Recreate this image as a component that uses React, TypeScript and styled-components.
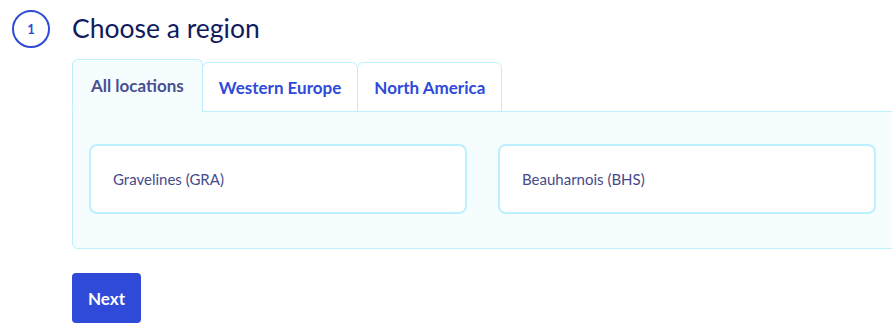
import styled, { createGlobalStyle } from "styled-components";
import { useState } from "react";

const GlobalStyle = createGlobalStyle`
    html, body {
        margin: 0;
        padding: 0;
        background: #ffffff;
        overflow: hidden;
    }
    body {
        font-family: "Lato", "Noto Sans", sans-serif;
    }
`;

const regions = ["All locations", "Western Europe", "North America"];
const locations = ["Gravelines (GRA)", "Beauharnois (BHS)"];

const App = () => {
    const [active, setActive] = useState(0);

    return (
        <>
            <GlobalStyle />
            <Step>
                <StepHeader>
                    <StepNumber>1</StepNumber>
                    <StepTitle>Choose a region</StepTitle>
                </StepHeader>
                <StepBody>
                    <TabList>
                        {regions.map((label, i) => (
                            <Tab key={label} $active={i === active} onClick={() => setActive(i)}>
                                {label}
                            </Tab>
                        ))}
                    </TabList>
                    <TabPanel>
                        {locations.map((name) => (
                            <LocationCard key={name}>{name}</LocationCard>
                        ))}
                    </TabPanel>
                    <NextButton type="button">Next</NextButton>
                </StepBody>
            </Step>
        </>
    );
};

export default App;

const Step = styled.div`
    padding: 10px 0 0 12px;
`;

const StepHeader = styled.div`
    display: flex;
    align-items: center;
    gap: 22px;
    height: 38px;
`;

const StepNumber = styled.div`
    box-sizing: border-box;
    width: 38px;
    height: 38px;
    border: 2px solid #2e4ad9;
    border-radius: 50%;
    display: flex;
    align-items: center;
    justify-content: center;
    color: #2e4ad9;
    font-size: 13px;
    font-weight: 700;
`;

const StepTitle = styled.h2`
    margin: 0 0 2px;
    font-size: 26.5px;
    font-weight: 400;
    color: #101a5e;
`;

const StepBody = styled.div`
    margin-left: 60px;
    padding-top: 11px;
`;

const TabList = styled.div`
    display: flex;
    align-items: flex-end;
    height: 53px;
    margin-bottom: -1px;
    position: relative;
    z-index: 1;
`;

const Tab = styled.button<{ $active: boolean }>`
    box-sizing: border-box;
    height: ${(p) => (p.$active ? "53px" : "50px")};
    padding: 0 ${(p) => (p.$active ? "18px" : "16px")};
    margin-right: -1px;
    border: 1px solid #bdefff;
    border-bottom-color: ${(p) => (p.$active ? "#f5fdff" : "#bdefff")};
    border-radius: 6px 6px 0 0;
    background: ${(p) => (p.$active ? "#f5fdff" : "#ffffff")};
    color: ${(p) => (p.$active ? "#4a4f8f" : "#2e4ad9")};
    font-family: inherit;
    font-size: 17px;
    font-weight: 700;
    cursor: pointer;
`;

const TabPanel = styled.div`
    box-sizing: border-box;
    width: 821px;
    height: 138px;
    padding: 32px 16px 0;
    border: 1px solid #bdefff;
    border-radius: 0 0 0 6px;
    background: #f5fdff;
    display: grid;
    grid-template-columns: 378px 378px;
    column-gap: 31px;
    align-items: start;
`;

const LocationCard = styled.div`
    box-sizing: border-box;
    height: 70px;
    padding: 0 22px;
    border: 2px solid #bdefff;
    border-radius: 8px;
    background: #ffffff;
    display: flex;
    align-items: center;
    color: #454b8a;
    font-size: 15px;
`;

const NextButton = styled.button`
    margin-top: 24px;
    height: 50px;
    padding: 0 16px;
    border: none;
    border-radius: 4px;
    background: #2f4ad9;
    color: #ffffff;
    font-family: inherit;
    font-size: 17px;
    font-weight: 700;
    cursor: pointer;
`;
